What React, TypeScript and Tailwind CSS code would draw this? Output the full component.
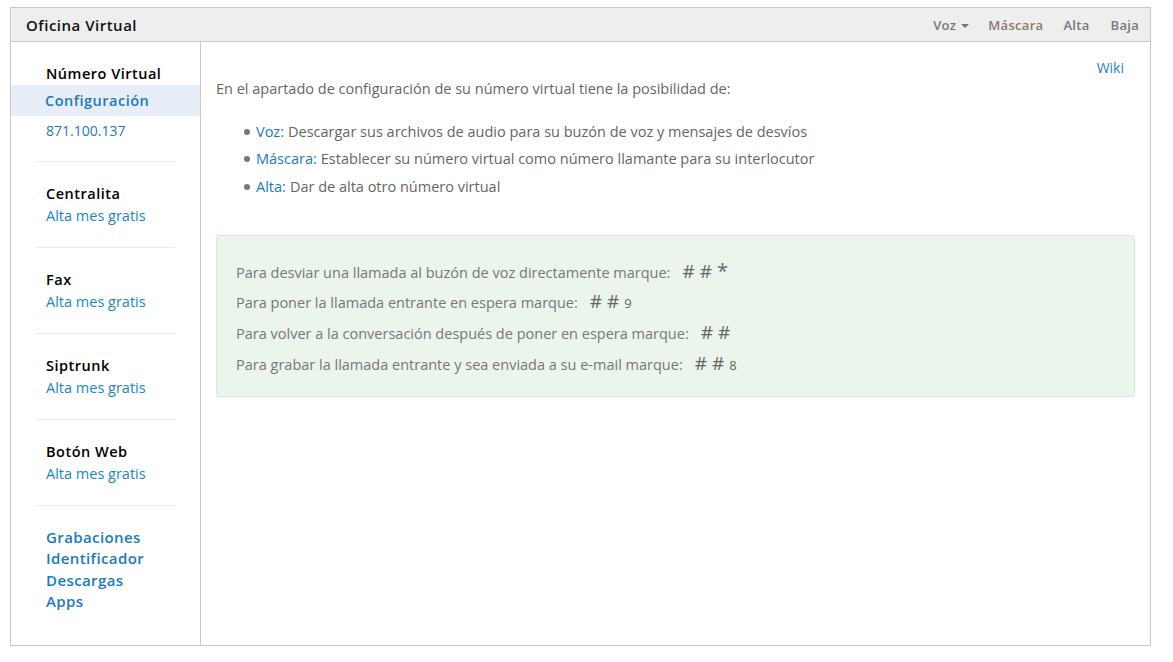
import { ReactNode } from "react";

function SideSection({ title, children }: { title: string; children: ReactNode }) {
  return (
    <div className="border-t border-[#ebebeb] mx-[25px] pl-[10px] pt-[21px] pb-[20px]">
      <h3 className="text-[14.5px] font-semibold text-black leading-[22px] tracking-[0.5px]">{title}</h3>
      <a className="block text-[14.5px] text-[#1a87c4] leading-[22px]">{children}</a>
    </div>
  );
}

function Bullet({ label, children }: { label: string; children: ReactNode }) {
  return (
    <li className="flex items-center h-[27.5px]">
      <span className="w-[6px] h-[6px] rounded-full bg-[#777] mr-[6px]"></span>
      <span className="text-[#1a7ac0]">{label}:</span>
      <span className="ml-[4px]">{children}</span>
    </li>
  );
}

function Code({ text, children }: { text: string; children?: ReactNode }) {
  return (
    <p className="flex items-baseline h-[31px]">
      <span>{text}</span>
      <span className="ml-[12px] text-[19px] text-[#666] whitespace-pre">{"# #"}</span>
      {children}
    </p>
  );
}

export default function App() {
  return (
    <div
      className="w-[1173px] h-[662px] bg-white pt-[7px] pl-[10px]"
      style={{ fontFamily: '"Open Sans", "Noto Sans", sans-serif' }}
    >
      <div className="w-[1141px] h-[639px] border border-[#c8c8c8] flex flex-col">
        <header className="h-[34px] bg-[#eeeeee] border-b border-[#c8c8c8] flex items-center pl-[15px] pr-[11px] pt-[2px]">
          <span className="text-[15px] font-semibold text-[#111] tracking-[0.5px]">Oficina Virtual</span>
          <nav className="ml-auto flex items-center text-[13px] font-semibold text-[#777] tracking-[0.3px]">
            <span className="flex items-center">
              Voz
              <span className="ml-[5px] w-0 h-0 border-l-[4px] border-r-[4px] border-t-[4px] border-l-transparent border-r-transparent border-t-[#777]"></span>
            </span>
            <span className="ml-[19px] text-[#8a7770]">Máscara</span>
            <span className="ml-[20px]">Alta</span>
            <span className="ml-[21px]">Baja</span>
          </nav>
        </header>
        <div className="flex flex-1">
          <aside className="w-[190px] border-r border-[#c8c8c8] pt-[21px]">
            <div className="pb-[16px]">
              <h3 className="pl-[35px] text-[14.5px] font-semibold text-black leading-[22px] tracking-[0.5px]">Número Virtual</h3>
              <a className="block pl-[34px] bg-[#e8eef8] h-[31px] leading-[31px] text-[14.5px] font-semibold text-[#1a7ac0] tracking-[0.5px]">
                Configuración
              </a>
              <a className="block pl-[35px] text-[14px] text-[#1a7ac0] leading-[29px]">871.100.137</a>
            </div>
            <SideSection title="Centralita">Alta mes gratis</SideSection>
            <SideSection title="Fax">Alta mes gratis</SideSection>
            <SideSection title="Siptrunk">Alta mes gratis</SideSection>
            <SideSection title="Botón Web">Alta mes gratis</SideSection>
            <div className="border-t border-[#ebebeb] mx-[25px] pl-[10px] pt-[21px] text-[15px] font-semibold text-[#1a7ac0] leading-[21.3px] tracking-[0.4px]">
              <a className="block">Grabaciones</a>
              <a className="block">Identificador</a>
              <a className="block">Descargas</a>
              <a className="block">Apps</a>
            </div>
          </aside>
          <main className="flex-1 pl-[15px] pr-[15px] pt-[16px] text-[14.5px] text-[#666]">
            <div className="flex justify-end pr-[11px] h-[20px]">
              <a className="text-[14px] text-[#1a87c4] -mt-[1px]">Wiki</a>
            </div>
            <p className="leading-[22px]">
              En el apartado de configuración de su número virtual tiene la posibilidad de:
            </p>
            <ul className="mt-[18px] pl-[28px]">
              <Bullet label="Voz">Descargar sus archivos de audio para su buzón de voz y mensajes de desvíos</Bullet>
              <Bullet label="Máscara">Establecer su número virtual como número llamante para su interlocutor</Bullet>
              <Bullet label="Alta">Dar de alta otro número virtual</Bullet>
            </ul>
            <div className="mt-[34px] bg-[#ebf5ec] border border-[#d8e8d9] rounded-[3px] pl-[19px] pt-[20px] pb-[16px] text-[#777]">
              <Code text="Para desviar una llamada al buzón de voz directamente marque:">
                <span className="ml-[5px] text-[20px] text-[#666]">*</span>
              </Code>
              <Code text="Para poner la llamada entrante en espera marque:">
                <span className="ml-[5px] text-[13px] text-[#666]">9</span>
              </Code>
              <Code text="Para volver a la conversación después de poner en espera marque:" />
              <Code text="Para grabar la llamada entrante y sea enviada a su e-mail marque:">
                <span className="ml-[5px] text-[13px] text-[#666]">8</span>
              </Code>
            </div>
          </main>
        </div>
      </div>
    </div>
  );
}
